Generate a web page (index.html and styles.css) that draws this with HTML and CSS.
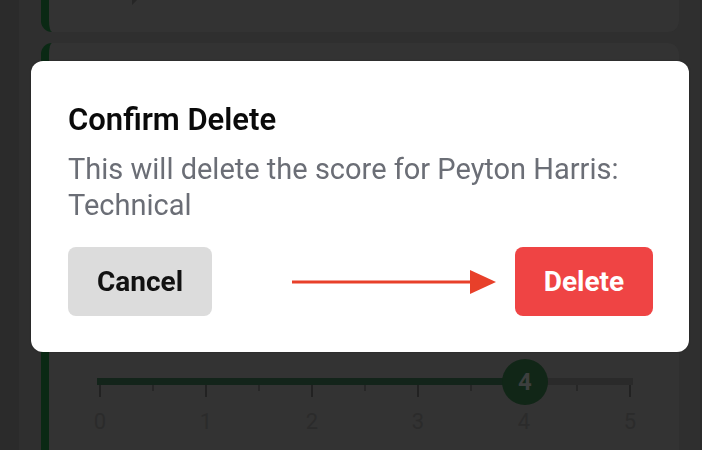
FILE: index.html
```html
<!DOCTYPE html>
<html lang="en">
<head>
<meta charset="utf-8">
<title>Confirm Delete</title>
<link rel="stylesheet" href="styles.css">
</head>
<body>
<div class="app">
  <div class="sidebar"></div>
  <main class="main">
    <section class="card card-top">
      <div class="icon-row">
        <svg class="ic" width="30" height="30" viewBox="0 0 30 30"><path d="M2 0 L2 30 L10 22 L30 22 L30 0 Z" fill="#262626"/></svg>
        <svg class="ic" width="30" height="30" viewBox="0 0 30 30"><rect x="0" y="0" width="30" height="28" fill="#2a2a2a"/></svg>
        <svg class="ic" width="32" height="30" viewBox="0 0 32 30"><rect x="0" y="0" width="32" height="30" fill="#262626"/></svg>
        <svg class="ic" width="26" height="30" viewBox="0 0 26 30"><circle cx="13" cy="15" r="12" fill="#262626"/></svg>
      </div>
    </section>
    <section class="card card-score">
      <div class="slider">
        <div class="track">
          <div class="fill"></div>
          <div class="thumb">4</div>
        </div>
        <div class="ticks">
          <span class="tick major"></span><span class="tick"></span>
          <span class="tick major"></span><span class="tick"></span>
          <span class="tick major"></span><span class="tick"></span>
          <span class="tick major"></span><span class="tick"></span>
          <span class="tick major"></span><span class="tick"></span>
          <span class="tick major"></span>
        </div>
        <div class="labels">
          <span>0</span><span>1</span><span>2</span><span>3</span><span>4</span><span>5</span>
        </div>
      </div>
    </section>
  </main>
</div>

<div class="overlay">
  <div class="dialog" role="dialog">
    <h2 class="dialog-title">Confirm Delete</h2>
    <p class="dialog-text">This will delete the score for Peyton Harris: Technical</p>
    <div class="actions">
      <button class="btn btn-cancel">Cancel</button>
      <div class="confirm-group">
        <svg class="arrow" width="204" height="26" viewBox="0 0 204 26">
          <rect x="0" y="11.5" width="182" height="3" fill="#e8402a"/>
          <path d="M178 1 L204 13 L178 25 Z" fill="#e8402a"/>
        </svg>
        <button class="btn btn-delete">Delete</button>
      </div>
    </div>
  </div>
</div>
</body>
</html>
```

FILE: styles.css
```css
* { box-sizing: border-box; }

html, body {
  margin: 0;
  padding: 0;
  height: 100%;
  overflow: hidden;
}

body {
  background: #2b2b2b;
  font-family: Roboto, "Liberation Sans", Arial, sans-serif;
}

.app {
  display: flex;
  height: 450px;
}

.sidebar {
  width: 19px;
  flex: none;
  background: #2b2b2b;
}

.main {
  width: 682px;
  flex: none;
  background: #2f2f2f;
  padding: 0 21px 0 22px;
  display: flex;
  flex-direction: column;
  gap: 11px;
  border-right: 1px solid #2a2a2a;
}

.card {
  background: #333333;
  border-left: 8px solid #0a2914;
  border-radius: 11px;
}

.card-top {
  height: 82px;
  margin-top: -50px;
  padding: 0 0 0 81px;
}

.icon-row {
  display: flex;
  align-items: flex-start;
}

.icon-row .ic:nth-child(1) { margin-top: 25px; }
.icon-row .ic:nth-child(2) { margin-left: 118px; margin-top: 19px; }
.icon-row .ic:nth-child(3) { margin-left: 116px; margin-top: 20px; }
.icon-row .ic:nth-child(4) { margin-left: 118px; margin-top: 21px; }

.card-score {
  flex: 1;
  border-bottom-left-radius: 0;
  border-bottom-right-radius: 0;
  padding: 312px 46px 0 48px;
}

.slider {
  display: flex;
  flex-direction: column;
}

.track {
  position: relative;
  height: 7px;
  background: #2a2a2a;
  margin-top: 23px;
}

.fill {
  width: 80%;
  height: 100%;
  background: #13241a;
}

.thumb {
  position: absolute;
  left: 80%;
  top: 50%;
  width: 46px;
  height: 46px;
  margin: -23px 0 0 -24px;
  border-radius: 50%;
  background: #112617;
  color: #3d3f3e;
  font-size: 24px;
  font-weight: 700;
  display: flex;
  align-items: center;
  justify-content: center;
}

.ticks {
  display: flex;
  justify-content: space-between;
  padding: 0 2px;
  height: 12px;
}

.tick {
  width: 2px;
  height: 6px;
  background: #272727;
}

.tick.major {
  height: 12px;
  background: #222222;
}

.labels {
  display: flex;
  justify-content: space-between;
  margin: 12px -4px 0 -4px;
  font-size: 22px;
  color: #2b2b2b;
  line-height: 26px;
}

.labels span {
  width: 14px;
  text-align: center;
}

.overlay {
  position: fixed;
  inset: 0;
  padding: 61px 13px 0 31px;
}

.dialog {
  background: #ffffff;
  border-radius: 12px;
  box-shadow: 0 0 2px rgba(0, 0, 0, 0.35);
  height: 291px;
  padding: 41px 36px 36px 37px;
  display: flex;
  flex-direction: column;
}

.dialog-title {
  margin: 0;
  font-size: 31px;
  font-weight: 600;
  color: #0a0a0a;
  line-height: 36px;
}

.dialog-text {
  margin: 13px 0 0 0;
  font-size: 29px;
  line-height: 36px;
  color: #6b6e76;
}

.actions {
  margin-top: auto;
  display: flex;
  justify-content: space-between;
  align-items: center;
}

.confirm-group {
  display: flex;
  align-items: center;
  gap: 19px;
}

.btn {
  height: 69px;
  border: none;
  border-radius: 8px;
  font-family: Roboto, "Liberation Sans", Arial, sans-serif;
  font-size: 28px;
  font-weight: 700;
  padding: 0;
}

.btn-cancel {
  width: 144px;
  background: #dcdcdc;
  color: #111111;
}

.btn-delete {
  width: 138px;
  background: #ef4444;
  color: #ffffff;
}
```
